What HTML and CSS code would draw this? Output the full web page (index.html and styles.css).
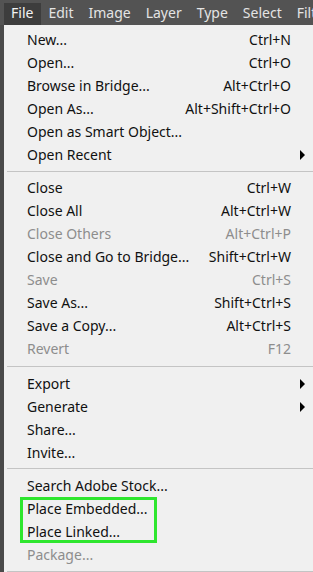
FILE: index.html
```html
<!DOCTYPE html>
<html lang="en">
  <head>
    <meta charset="UTF-8" />
    <meta name="viewport" content="width=device-width, initial-scale=1.0" />
    <title>File Menu</title>
    <link rel="stylesheet" href="styles.css">
  </head>
  <body>
    <div class="menubar">
      <span class="menubar-item active">File</span>
      <span class="menubar-item">Edit</span>
      <span class="menubar-item">Image</span>
      <span class="menubar-item">Layer</span>
      <span class="menubar-item">Type</span>
      <span class="menubar-item">Select</span>
      <span class="menubar-item">Filt</span>
    </div>

    <div class="workspace">
      <div class="toolstrip"></div>

      <div class="menu">
        <div class="item"><span>New...</span><span class="key">Ctrl+N</span></div>
        <div class="item"><span>Open...</span><span class="key">Ctrl+O</span></div>
        <div class="item"><span>Browse in Bridge...</span><span class="key">Alt+Ctrl+O</span></div>
        <div class="item"><span>Open As...</span><span class="key">Alt+Shift+Ctrl+O</span></div>
        <div class="item"><span>Open as Smart Object...</span></div>
        <div class="item"><span>Open Recent</span><span class="key"></span><span class="arrow"></span></div>

        <div class="sep"></div>

        <div class="item"><span>Close</span><span class="key">Ctrl+W</span></div>
        <div class="item"><span>Close All</span><span class="key">Alt+Ctrl+W</span></div>
        <div class="item disabled"><span>Close Others</span><span class="key">Alt+Ctrl+P</span></div>
        <div class="item"><span>Close and Go to Bridge...</span><span class="key">Shift+Ctrl+W</span></div>
        <div class="item disabled"><span>Save</span><span class="key">Ctrl+S</span></div>
        <div class="item"><span>Save As...</span><span class="key">Shift+Ctrl+S</span></div>
        <div class="item"><span>Save a Copy...</span><span class="key">Alt+Ctrl+S</span></div>
        <div class="item disabled"><span>Revert</span><span class="key">F12</span></div>

        <div class="sep wide"></div>

        <div class="item"><span>Export</span><span class="key"></span><span class="arrow"></span></div>
        <div class="item"><span>Generate</span><span class="key"></span><span class="arrow"></span></div>
        <div class="item"><span>Share...</span></div>
        <div class="item"><span>Invite...</span></div>

        <div class="sep mid"></div>

        <div class="item"><span>Search Adobe Stock...</span></div>
        <div class="item"><span>Place Embedded...</span></div>
        <div class="item"><span>Place Linked...</span></div>
        <div class="item disabled"><span>Package...</span></div>

        <div class="sep"></div>

        <!-- green box drawn over the two place items -->
        <div class="highlight"></div>
      </div>
    </div>
  </body>
</html>
```

FILE: styles.css
```css
html,
body {
  margin: 0;
  height: 100%;
  overflow: hidden;
}

body {
  font-family: "Noto Sans", "Open Sans", sans-serif;
  font-size: 14px;
  background-color: #535353;
}

.menubar {
  display: flex;
  align-items: flex-end;
  height: 25px;
  padding-left: 3.5px;
  background-color: #535353;
  white-space: nowrap;
  overflow: hidden;
}

.menubar-item {
  padding: 0 7.5px 2px;
  height: 20px;
  line-height: 20px;
  color: #e4e4e4;
}

.menubar-item.active {
  background-color: #3d3d3d;
  color: #f2f2f2;
}

.workspace {
  display: flex;
  height: 547px;
}

.toolstrip {
  width: 4px;
  background-color: #4a4a4a;
}

.menu {
  position: relative;
  flex: 1;
  padding-top: 3px;
  background-color: #f0f0f0;
}

.item {
  display: grid;
  grid-template-columns: 1fr auto 22px;
  align-items: center;
  height: 23px;
  padding-left: 23px;
  color: #111;
  white-space: nowrap;
}

.item.disabled {
  color: #8d8d8d;
}

.key {
  text-align: right;
}

.arrow {
  justify-self: start;
  margin-left: 9px;
  width: 0;
  height: 0;
  border-top: 5px solid transparent;
  border-bottom: 5px solid transparent;
  border-left: 5px solid #000;
}

.sep {
  height: 1px;
  margin: 5px 0 4px 3px;
  background-color: #c4c4c4;
}

.sep.wide {
  margin: 6px 0 5px 3px;
}

.sep.mid {
  margin: 4px 0 5px 3px;
}

.highlight {
  position: absolute;
  left: 16px;
  top: 472px;
  width: 131px;
  height: 40px;
  border: 3px solid #2ee62e;
}
```
